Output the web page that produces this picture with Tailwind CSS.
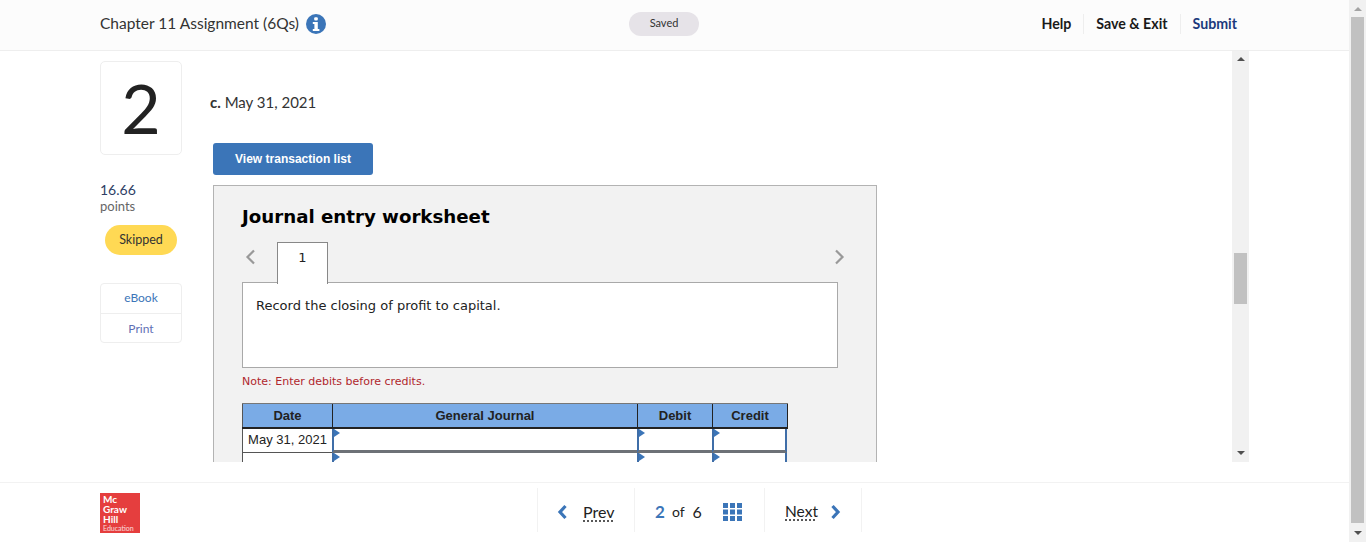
<!DOCTYPE html>
<html>
<head>
<meta charset="utf-8">
<script src="https://cdn.jsdelivr.net/npm/@tailwindcss/browser@4"></script>
</head>
<body class="bg-white overflow-hidden font-['Lato',sans-serif]">
<div class="flex h-[542px] w-[1366px] overflow-hidden">
  <div class="w-[1349px] flex flex-col">
    <header class="h-[51px] shrink-0 bg-[#fcfcfc] border-b border-[#eeeeee] flex items-center relative pl-[100px] pr-[112px] pb-[2px]">
      <div class="flex items-center gap-[7px] text-[15.500px] text-[#333333]">
        <span>Chapter 11 Assignment (6Qs)</span>
        <svg width="20" height="20" viewBox="0 0 20 20"><circle cx="10" cy="10" r="10" fill="#3b75b8"/><rect x="8.2" y="3.2" width="3.6" height="3.2" rx="1" fill="#fff"/><path d="M6.8 8h5v7h1.6v2H6.8v-2h1.6v-5H6.8z" fill="#fff"/></svg>
      </div>
      <div class="absolute left-[629px] top-[12px] w-[70px] h-[24px] rounded-full bg-[#e6e3e8] flex items-center justify-center pb-[1px] text-[11px] text-[#333333]">Saved</div>
      <nav class="ml-auto flex items-center text-[14.200px] font-bold text-[#1a1a1a]">
        <span class="pr-[12px] border-r border-[#eeeeee] h-[20px] leading-[20px]">Help</span>
        <span class="pl-[12px] pr-[12px] border-r border-[#eeeeee] h-[20px] leading-[20px]">Save &amp; Exit</span>
        <span class="pl-[12px] h-[20px] leading-[20px] text-[#1c3a7c]">Submit</span>
      </nav>
    </header>

    <main class="h-[411px] shrink-0 flex pl-[100px] pr-[100px]">
      <aside class="w-[82px] shrink-0 pt-[10px]">
        <div class="h-[94px] border border-[#eeeeee] rounded-[5px] flex items-center justify-center text-[68px] font-normal text-[#222222] leading-none">2</div>
        <div class="mt-[26px] text-[14px] leading-[18px] text-[#2f3f66]">16.66</div>
        <div class="text-[13px] leading-[15px] text-[#666666]">points</div>
        <div class="ml-[5px] mt-[11px] w-[72px] h-[30px] rounded-full bg-[#ffd954] flex items-center justify-center pt-[1px] text-[12.500px] text-[#333333]">Skipped</div>
        <div class="mt-[28px] border border-[#eeeeee] rounded-[4px] text-[12px] text-center">
          <div class="h-[30px] leading-[28px] border-b border-[#eeeeee] text-[#3b75b8]">eBook</div>
          <div class="h-[28px] leading-[29px] text-[#5f6fb5]">Print</div>
        </div>
      </aside>

      <section class="flex-1 min-w-0 overflow-hidden pl-[31px]">
        <p class="-ml-[3px] mt-[41px] h-[20px] leading-[20px] text-[15px] text-[#333333]"><b class="font-bold">c.</b> May 31, 2021</p>
        <button class="block mt-[31px] w-[160px] h-[32px] rounded-[3px] bg-[#3b75b8] text-white text-[12px] font-bold font-['Liberation_Sans',sans-serif]">View transaction list</button>
        <div class="mt-[10px] w-[664px] h-[400px] bg-[#f2f2f2] border border-[#b3b3b3] pl-[28px] pt-[18px] font-['DejaVu_Sans',sans-serif]">
          <h2 class="text-[18.200px] leading-[26px] font-bold text-[#000000]">Journal entry worksheet</h2>
          <div class="relative h-[40px] mt-[12px]">
            <svg class="absolute left-[3px] top-[7px]" width="11" height="16" viewBox="0 0 11 16"><path d="M9 1.5 2.5 8 9 14.500" fill="none" stroke="#999999" stroke-width="2.200"/></svg>
            <svg class="absolute left-[592px] top-[7px]" width="11" height="16" viewBox="0 0 11 16"><path d="M2 1.500 8.500 8 2 14.500" fill="none" stroke="#999999" stroke-width="2.200"/></svg>
            <div class="absolute left-[35px] top-0 w-[51px] h-[42px] bg-white border border-b-0 border-[#888888] text-center text-[13px] leading-[30px] text-[#222222] z-10">1</div>
          </div>
          <div class="w-[596px] h-[86px] bg-white border border-[#a9a9a9] px-[13px] pt-[14px] text-[13px] leading-[18px] text-[#222222]">Record the closing of profit to capital.</div>
          <p class="mt-[7px] h-[14px] text-[11px] leading-[14px] text-[#b0272d]">Note: Enter debits before credits.</p>
          <div class="mt-[14px] w-[546px] font-['Liberation_Sans',sans-serif] text-[13px] text-[#222222]">
            <div class="grid grid-cols-[90px_305px_75px_76px] h-[26px] bg-[#7aabe6] border-t border-[#777777] border-b-2 border-b-[#222222] font-bold text-center leading-[23px]">
              <div class="border-l border-[#555555]">Date</div>
              <div class="border-l border-[#222222]">General Journal</div>
              <div class="border-l border-[#222222]">Debit</div>
              <div class="border-l border-r border-[#222222]">Credit</div>
            </div>
            <div class="grid grid-cols-[90px_305px_75px_75px] h-[24px]">
              <div class="bg-white border-l border-b border-[#555555] text-center leading-[22px]">May 31, 2021</div>
              <div class="relative bg-white border-2 border-t-0 border-r-0 border-b-[3px] border-[#3f6ea8] border-b-[#6d7177]"><span class="absolute left-0 top-0 w-0 h-0 border-y-[4px] border-y-transparent border-l-[6px] border-l-[#3b75b8]"></span></div>
              <div class="relative bg-white border-2 border-t-0 border-r-0 border-b-[3px] border-[#3f6ea8] border-b-[#6d7177]"><span class="absolute left-0 top-0 w-0 h-0 border-y-[4px] border-y-transparent border-l-[6px] border-l-[#3b75b8]"></span></div>
              <div class="relative bg-white border-2 border-t-0 border-b-[3px] border-[#3f6ea8] border-b-[#6d7177]"><span class="absolute left-0 top-0 w-0 h-0 border-y-[4px] border-y-transparent border-l-[6px] border-l-[#3b75b8]"></span></div>
            </div>
            <div class="grid grid-cols-[90px_305px_75px_75px] h-[24px]">
              <div class="bg-white border-l border-[#555555]"></div>
              <div class="relative bg-white border-l-2 border-[#3f6ea8]"><span class="absolute left-0 top-0 w-0 h-0 border-y-[4px] border-y-transparent border-l-[6px] border-l-[#3b75b8]"></span></div>
              <div class="relative bg-white border-l-2 border-[#3f6ea8]"><span class="absolute left-0 top-0 w-0 h-0 border-y-[4px] border-y-transparent border-l-[6px] border-l-[#3b75b8]"></span></div>
              <div class="relative bg-white border-x-2 border-[#3f6ea8]"><span class="absolute left-0 top-0 w-0 h-0 border-y-[4px] border-y-transparent border-l-[6px] border-l-[#3b75b8]"></span></div>
            </div>
          </div>
        </div>
      </section>

      <div class="w-[17px] shrink-0 bg-[#f1f1f1] flex flex-col items-center relative">
        <svg class="mt-[6px]" width="8" height="4" viewBox="0 0 8 4"><path d="M4 0 8 4H0z" fill="#505050"/></svg>
        <div class="mt-[192px] w-[13px] h-[51px] bg-[#c1c1c1]"></div>
        <svg class="mt-auto mb-[7px]" width="8" height="4" viewBox="0 0 8 4"><path d="M0 0h8L4 4z" fill="#505050"/></svg>
      </div>
    </main>

    <div class="h-[20px] shrink-0"></div>

    <footer class="flex-1 border-t border-[#f2f2f2] pl-[100px] flex relative">
      <div class="mt-[10px] w-[40px] h-[40px] bg-[#e53e3e] text-white font-bold text-[10px] leading-[10px] pl-[3px] pt-[1px] font-['Lato',sans-serif]">
        <div class="h-[10px]">Mc</div><div class="h-[10px]">Graw</div><div class="h-[10px]">Hill</div><div class="h-[8px] text-[7px] leading-[8px] font-normal text-white/80">Education</div>
      </div>
      <div class="absolute left-[537px] top-[5px] h-[44px] flex text-[#222222] text-[16px]">
        <div class="w-[98px] border-x border-[#f2f2f2] flex items-center pl-[18px] pt-[3px] gap-[14px]">
          <svg width="13" height="16" viewBox="0 0 13 16"><path d="M9.500 2 4 8l5.500 6" fill="none" stroke="#3b75b8" stroke-width="3.200"/></svg>
          <span class="underline decoration-dotted underline-offset-[3px] text-[16px]">Prev</span>
        </div>
        <div class="w-[130px] border-r border-[#f2f2f2] flex items-center pl-[20px] pt-[3px]">
          <b class="font-bold text-[#3b75b8] text-[17px]">2</b>
          <span class="ml-[7px] text-[14px]">of</span>
          <span class="ml-[8px]">6</span>
          <svg class="ml-[21px]" width="19" height="18" viewBox="0 0 19 18" fill="#3b75b8"><rect width="5" height="5"/><rect x="7" width="5" height="5"/><rect x="14" width="5" height="5"/><rect y="6.500" width="5" height="5"/><rect x="7" y="6.500" width="5" height="5"/><rect x="14" y="6.500" width="5" height="5"/><rect y="13" width="5" height="5"/><rect x="7" y="13" width="5" height="5"/><rect x="14" y="13" width="5" height="5"/></svg>
        </div>
        <div class="w-[97px] border-r border-[#f2f2f2] flex items-center pl-[20px] pt-[3px] gap-[11px]">
          <span class="underline decoration-dotted underline-offset-[3px] text-[15.500px]">Next</span>
          <svg width="13" height="16" viewBox="0 0 13 16"><path d="M3.500 2 9 8l-5.500 6" fill="none" stroke="#3b75b8" stroke-width="3.200"/></svg>
        </div>
      </div>
    </footer>
  </div>

  <div class="w-[17px] shrink-0 bg-[#f1f1f1] flex flex-col items-center">
    <svg class="mt-[7px]" width="8" height="4" viewBox="0 0 8 4"><path d="M4 0 8 4H0z" fill="#a3a3a3"/></svg>
    <div class="mt-[6px] w-[13px] h-[506px] bg-[#c1c1c1]"></div>
    <svg class="mt-auto mb-[7px]" width="8" height="4" viewBox="0 0 8 4"><path d="M0 0h8L4 4z" fill="#505050"/></svg>
  </div>
</div>
</body>
</html>
